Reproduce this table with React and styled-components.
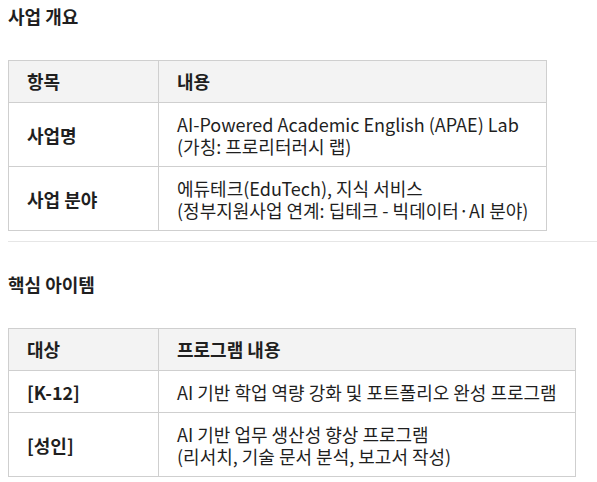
import React from 'react';
import styled, { createGlobalStyle } from 'styled-components';

const Global = createGlobalStyle`
  body {
    margin: 0;
    background: #fff;
    color: #1f1f1f;
    font-family: "Noto Sans CJK KR", "Noto Sans", sans-serif;
  }
`

const Page = styled.div`
  padding: 4px 0 0 8px;
`

const Heading = styled.h3`
  margin: 0;
  font-size: 18px;
  line-height: 24px;
  font-weight: 700;
`

const Table = styled.table`
  border-collapse: collapse;
  margin: 32px 0 10px 0;
  font-size: 18px;
  line-height: 22px;
`

const Th = styled.th`
  background: #f3f3f3;
  border: 1px solid #cfcfcf;
  padding: 9px 18px 10px;
  text-align: left;
  font-weight: 700;
  width: ${p => p.$w || 'auto'};
`

const Td = styled.td`
  border: 1px solid #cfcfcf;
  padding: 10px 18px 9px;
  vertical-align: middle;
  font-weight: ${p => (p.$bold ? 700 : 400)};
`

const Rule = styled.hr`
  margin: 0 0 30px 0;
  border: none;
  border-top: 1px solid #e6e6e6;
`

const overview = [
  ['사업명', ['AI-Powered Academic English (APAE) Lab', '(가칭: 프로리터러시 랩)']],
  ['사업 분야', ['에듀테크(EduTech), 지식 서비스', '(정부지원사업 연계: 딥테크 - 빅데이터·AI 분야)']],
]

const items = [
  ['[K-12]', ['AI 기반 학업 역량 강화 및 포트폴리오 완성 프로그램']],
  ['[성인]', ['AI 기반 업무 생산성 향상 프로그램', '(리서치, 기술 문서 분석, 보고서 작성)']],
]

const InfoTable = ({ head, rows }) => (
  <Table>
    <thead>
      <tr>
        <Th $w="113px">{head[0]}</Th>
        <Th>{head[1]}</Th>
      </tr>
    </thead>
    <tbody>
      {rows.map(([k, lines]) => (
        <tr key={k}>
          <Td $bold>{k}</Td>
          <Td>
            {lines.map((l, i) => (
              <React.Fragment key={i}>
                {i > 0 && <br />}
                {l}
              </React.Fragment>
            ))}
          </Td>
        </tr>
      ))}
    </tbody>
  </Table>
)

const App = () => (
  <Page>
    <Global />
    <Heading>사업 개요</Heading>
    <InfoTable head={['항목', '내용']} rows={overview} />
    <Rule />
    <Heading>핵심 아이템</Heading>
    <InfoTable head={['대상', '프로그램 내용']} rows={items} />
  </Page>
)

export default App;
